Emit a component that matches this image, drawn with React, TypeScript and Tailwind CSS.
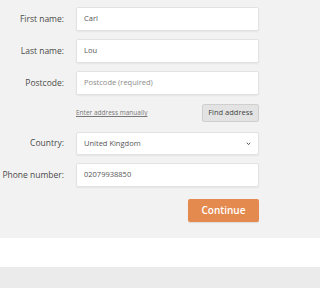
import React from "react";

const font = { fontFamily: '"Open Sans", "Liberation Sans", sans-serif' };

function Row({ label, children }: { label: string; children: React.ReactNode }) {
  return (
    <div className="flex items-center">
      <label className="w-[65px] shrink-0 text-right text-[8.5px] text-[#4a4a4a] pr-[1px]">{label}</label>
      <div className="ml-[11px] w-[183px]">{children}</div>
    </div>
  );
}

function Input({ value, placeholder }: { value?: string; placeholder?: string }) {
  return (
    <div className="h-[24px] w-full bg-white border border-[#e2e2e2] rounded-[2px] shadow-[0_1px_2px_rgba(0,0,0,0.06)] flex items-center px-[7px] text-[7.5px]">
      {value ? (
        <span className="text-[#555]">{value}</span>
      ) : (
        <span className="text-[#8a8a8a]">{placeholder}</span>
      )}
    </div>
  );
}

export default function App() {
  return (
    <div className="w-full h-[288px] overflow-hidden" style={font}>
      <div className="bg-[#f2f2f2] h-[238px] pt-[7px]">
        <div className="flex flex-col gap-[8px]">
          <Row label="First name:">
            <Input value="Carl" />
          </Row>
          <Row label="Last name:">
            <Input value="Lou" />
          </Row>
          <Row label="Postcode:">
            <Input placeholder="Postcode (required)" />
          </Row>
        </div>
        <div className="flex items-center mt-[9px] ml-[76px] w-[183px] justify-between">
          <span className="text-[6.5px] text-[#777] underline">Enter address manually</span>
          <div className="h-[18px] w-[57px] bg-[#e3e3e3] border border-[#cfcfcf] rounded-[2px] flex items-center justify-center text-[7.5px] text-[#444]">
            Find address
          </div>
        </div>
        <div className="flex flex-col gap-[8px] mt-[10px]">
          <Row label="Country:">
            <div className="h-[23px] w-full bg-white border border-[#e2e2e2] rounded-[2px] shadow-[0_1px_2px_rgba(0,0,0,0.06)] flex items-center justify-between px-[7px] text-[7.5px] text-[#555]">
              <span>United Kingdom</span>
              <svg width="5" height="4" viewBox="0 0 5 4">
                <path d="M0.8 0.8 L2.5 2.6 L4.2 0.8" stroke="#555" strokeWidth="1" fill="none" />
              </svg>
            </div>
          </Row>
          <Row label="Phone number:">
            <Input value="02079938850" />
          </Row>
        </div>
        <div className="flex justify-start mt-[12px] ml-[188px]">
          <div className="h-[23px] w-[71px] bg-[#e58a4e] rounded-[2px] flex items-center justify-center text-white text-[10px] font-semibold shadow-[0_1px_1px_rgba(0,0,0,0.1)]">
            Continue
          </div>
        </div>
      </div>
      <div className="bg-white h-[29px]" />
      <div className="bg-[#ebebeb] h-[21px]" />
    </div>
  );
}
